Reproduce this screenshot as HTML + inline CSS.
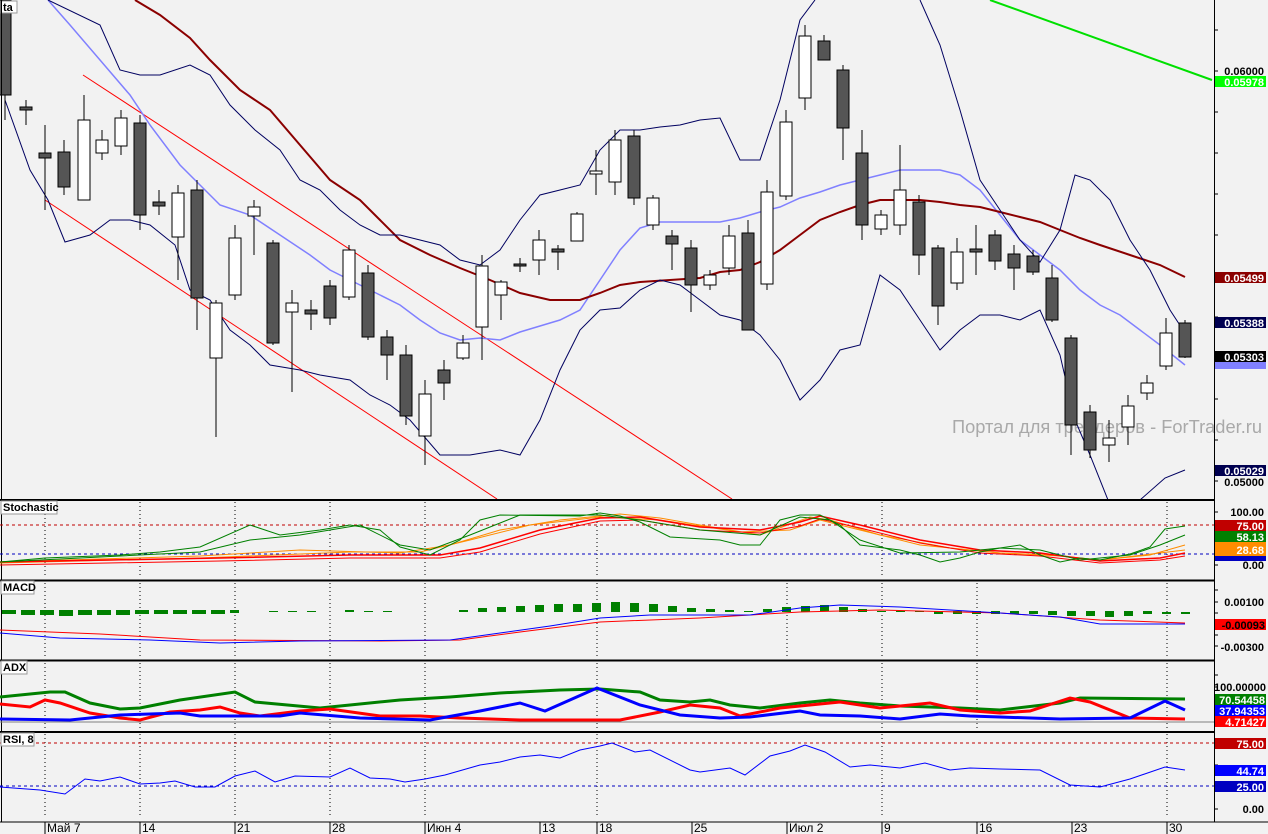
<!DOCTYPE html>
<html><head><meta charset="utf-8"><style>
html,body{margin:0;padding:0;background:#f2f2f2;}
svg{display:block;font-family:"Liberation Sans",sans-serif;}
.t{font-size:11px;font-weight:bold;}
.w{fill:#fff;}
</style></head><body>
<svg width="1268" height="834" viewBox="0 0 1268 834" xmlns="http://www.w3.org/2000/svg">
<rect width="1268" height="834" fill="#f2f2f2"/>
<defs><clipPath id="m"><rect x="0" y="0" width="1214" height="499"/></clipPath></defs>
<text x="952" y="433" font-size="18" fill="#a9a9a9" textLength="310" lengthAdjust="spacingAndGlyphs">Портал для трейдеров - ForTrader.ru</text>
<g clip-path="url(#m)">
<line x1="990" y1="0" x2="1212" y2="80" stroke="#00e000" stroke-width="2"/>
<line x1="83" y1="75" x2="732" y2="499" stroke="#ff0000" stroke-width="1"/>
<line x1="45" y1="200" x2="497" y2="499" stroke="#ff0000" stroke-width="1"/>
<polyline fill="none" stroke="#8080ff" stroke-width="1.5" points="48,0 70,25 100,60 130,95 150,125 180,165 200,185 220,205 250,215 280,235 310,255 330,270 350,280 380,295 400,305 420,320 440,333 460,340 480,338 500,340 520,332 540,326 560,320 580,310 600,280 620,250 640,228 660,222 720,222 740,218 760,212 780,207 800,198 820,192 840,185 860,180 880,175 900,170 940,170 960,175 980,190 1000,215 1020,240 1040,255 1060,270 1080,290 1100,305 1120,315 1140,330 1160,345 1185,365"/>
<polyline fill="none" stroke="#8b0000" stroke-width="2" points="135,0 160,15 190,38 210,60 240,90 270,110 300,145 330,180 360,200 380,220 400,240 430,255 460,268 490,280 520,293 550,300 580,300 600,293 620,285 640,282 670,280 700,278 720,272 740,270 760,262 780,250 800,235 820,220 840,212 860,205 880,200 920,200 940,202 960,205 980,207 1000,212 1020,217 1040,222 1060,230 1080,238 1100,245 1130,255 1160,265 1185,277"/>
<polyline fill="none" stroke="#000060" stroke-width="1" points="48,0 100,25 120,70 140,75 160,75 190,65 210,75 230,105 255,130 280,150 300,180 320,190 340,210 360,225 380,235 400,235 420,240 440,245 460,260 480,265 500,250 520,220 540,195 560,190 580,185 600,150 620,130 640,130 660,127 680,125 700,120 720,118 740,160 760,160 780,100 800,20 815,0"/>
<polyline fill="none" stroke="#000060" stroke-width="1" points="920,0 940,45 960,110 980,180 1000,210 1020,240 1040,262 1060,230 1075,175 1090,180 1110,200 1130,240 1150,270 1170,310 1185,333"/>
<polyline fill="none" stroke="#000060" stroke-width="1" points="5,100 30,170 48,200 65,242 90,235 110,220 130,220 150,225 175,245 190,290 210,300 230,330 250,345 270,365 300,370 320,375 350,380 370,395 390,405 410,420 440,455 470,455 500,450 520,455 540,420 560,370 580,330 600,310 620,308 640,290 660,280 680,285 700,300 720,315 740,320 760,335 780,360 800,400 820,380 840,350 860,345 880,275 900,290 920,320 940,350 960,330 980,315 1000,315 1020,320 1040,310 1060,355 1075,420 1090,455 1108,500"/>
<polyline fill="none" stroke="#000060" stroke-width="1" points="1140,500 1165,478 1185,470"/>
<path stroke="#000" stroke-width="1" fill="none" d="M5 0V120M26 100V125M45 125V210M64 140V195M84 95V200M102 130V160M121 110V155M140 115V230M159 190V215M178 185V280M197 180V330M216 300V437M235 225V300M254 200V255M273 240V345M292 290V392M311 300V330M330 280V325M349 245V300M368 265V340M387 330V380M406 345V425M425 380V465M444 360V400M463 335V360M482 255V360M501 280V320M520 258V272M539 230V275M558 245V270M577 212V241M596 150V195M615 130V195M634 130V205M653 195V230M672 230V270M691 240V312M710 270V290M729 225V275M748 220V330M767 180V290M786 110V200M805 25V110M824 35V60M843 65V160M862 130V240M881 210V235M900 145V235M919 195V275M938 245V325M957 238V290M976 225V275M995 230V270M1014 245V290M1033 250V275M1052 265V322M1071 335V455M1090 405V458M1109 420V462M1128 395V445M1147 375V400M1166 318V370M1185 320V358"/>
<g stroke="#000" stroke-width="1">
<g fill="#555">
<rect x="-1" y="0" width="12" height="95"/><rect x="20" y="107" width="12" height="3"/><rect x="39" y="153" width="12" height="5"/><rect x="58" y="152" width="12" height="35"/><rect x="134" y="123" width="12" height="92"/><rect x="153" y="202" width="12" height="4"/><rect x="191" y="190" width="12" height="108"/><rect x="267" y="243" width="12" height="100"/><rect x="305" y="310" width="12" height="4"/><rect x="324" y="286" width="12" height="32"/><rect x="362" y="273" width="12" height="64"/><rect x="381" y="337" width="12" height="18"/><rect x="400" y="355" width="12" height="61"/><rect x="438" y="370" width="12" height="13"/><rect x="514" y="264" width="12" height="2"/><rect x="552" y="249" width="12" height="3"/><rect x="628" y="136" width="12" height="62"/><rect x="666" y="236" width="12" height="8"/><rect x="685" y="248" width="12" height="37"/><rect x="742" y="233" width="12" height="97"/><rect x="818" y="41" width="12" height="19"/><rect x="837" y="70" width="12" height="58"/><rect x="856" y="153" width="12" height="72"/><rect x="913" y="202" width="12" height="53"/><rect x="932" y="248" width="12" height="58"/><rect x="970" y="249" width="12" height="3"/><rect x="989" y="235" width="12" height="26"/><rect x="1008" y="254" width="12" height="14"/><rect x="1027" y="256" width="12" height="16"/><rect x="1046" y="278" width="12" height="42"/><rect x="1065" y="338" width="12" height="87"/><rect x="1084" y="412" width="12" height="38"/><rect x="1179" y="323" width="12" height="34"/>
</g>
<g fill="#fff">
<rect x="78" y="120" width="12" height="80"/><rect x="96" y="140" width="12" height="13"/><rect x="115" y="118" width="12" height="28"/><rect x="172" y="193" width="12" height="44"/><rect x="210" y="303" width="12" height="55"/><rect x="229" y="238" width="12" height="57"/><rect x="248" y="207" width="12" height="9"/><rect x="286" y="303" width="12" height="9"/><rect x="343" y="250" width="12" height="47"/><rect x="419" y="394" width="12" height="42"/><rect x="457" y="343" width="12" height="15"/><rect x="476" y="266" width="12" height="61"/><rect x="495" y="282" width="12" height="13"/><rect x="533" y="240" width="12" height="20"/><rect x="571" y="214" width="12" height="27"/><rect x="590" y="171" width="12" height="3"/><rect x="609" y="140" width="12" height="42"/><rect x="647" y="198" width="12" height="27"/><rect x="704" y="275" width="12" height="10"/><rect x="723" y="236" width="12" height="32"/><rect x="761" y="192" width="12" height="92"/><rect x="780" y="122" width="12" height="74"/><rect x="799" y="36" width="12" height="62"/><rect x="875" y="215" width="12" height="14"/><rect x="894" y="190" width="12" height="35"/><rect x="951" y="252" width="12" height="31"/><rect x="1103" y="438" width="12" height="7"/><rect x="1122" y="406" width="12" height="21"/><rect x="1141" y="383" width="12" height="10"/><rect x="1160" y="333" width="12" height="33"/>
</g></g>
</g>
<rect x="1" y="1" width="16" height="12" fill="#fff" stroke="#999"/>
<text x="3" y="11" class="t">ta</text>
<g stroke="#000">
<line x1="1214.5" y1="0" x2="1214.5" y2="822" stroke-width="1"/>
<line x1="0" y1="500" x2="1215" y2="500" stroke-width="2"/>
<line x1="0" y1="580.5" x2="1215" y2="580.5" stroke-width="2"/>
<line x1="0" y1="660.5" x2="1215" y2="660.5" stroke-width="2"/>
<line x1="0" y1="732" x2="1215" y2="732" stroke-width="2"/>
<line x1="0" y1="822" x2="1268" y2="822" stroke-width="1"/>
<line x1="1.5" y1="0" x2="1.5" y2="822" stroke-width="1"/>
</g>
<path stroke="#000" d="M1214 30H1218M1214 71H1218M1214 112H1218M1214 153H1218M1214 194H1218M1214 235H1218M1214 276H1218M1214 317H1218M1214 358H1218M1214 399H1218M1214 440H1218M1214 481H1218"/>
<g stroke="#000" stroke-dasharray="1,3">
<path d="M45 502V578M140 502V578M235 502V578M330 502V578M425 502V578M597 502V578M882 502V578M1167 502V578M45 583V658M140 583V658M235 583V658M330 583V658M425 583V658M597 583V658M787 583V658M882 583V658M977 583V658M1167 583V658M45 663V730M140 663V730M235 663V730M330 663V730M425 663V730M597 663V730M882 663V730M977 663V730M1167 663V730M45 734V818M140 734V818M235 734V818M330 734V818M425 734V818M597 734V818M882 734V818M1167 734V818"/>
</g>
<line x1="0" y1="525" x2="1214" y2="525" stroke="#c00000" stroke-dasharray="3,3"/>
<line x1="0" y1="554" x2="1214" y2="554" stroke="#0000c0" stroke-dasharray="3,3"/>
<polyline fill="none" stroke="#ff8c00" points="0,562 200,556 300,550 400,553 450,545 500,530 560,520 620,514 660,518 700,525 760,535 810,517 830,520 880,535 950,548 1000,553 1050,555 1100,560 1150,555 1185,545"/>
<polyline fill="none" stroke="#ff8c00" points="0,563 200,558 350,552 420,552 470,540 530,525 600,517 660,520 740,532 790,530 820,520 860,530 920,545 1000,553 1060,556 1100,560 1160,553 1185,550"/>
<polyline fill="none" stroke="#ff0000" stroke-width="1.5" points="0,562 220,558 350,555 440,555 480,548 540,530 600,518 640,517 700,527 760,530 800,522 820,516 860,525 920,540 980,550 1040,553 1100,561 1160,558 1185,553"/>
<polyline fill="none" stroke="#ff0000" points="0,565 220,561 350,558 440,558 480,552 540,534 600,521 640,520 700,530 760,533 800,526 820,519 860,528 920,543 980,553 1040,556 1100,563 1160,560 1185,556"/>
<polyline fill="none" stroke="#008000" points="0,562 45,558 120,555 160,552 200,547 250,525 280,535 320,530 350,525 380,530 400,547 430,555 460,540 480,520 500,515 580,516 600,513 620,516 640,522 670,537 720,540 740,545 760,545 780,520 800,515 820,515 840,525 860,545 900,550 920,555 940,562 960,558 980,552 1000,548 1020,545 1040,555 1060,562 1080,558 1100,560 1130,554 1150,547 1165,529 1185,526"/>
<polyline fill="none" stroke="#008000" points="0,562 200,552 250,540 300,535 360,525 400,545 430,550 470,535 520,515 600,515 640,520 700,530 760,535 800,517 830,520 860,540 900,553 960,552 1000,548 1040,550 1080,560 1130,555 1160,545 1185,535"/>
<rect x="1" y="501" width="56" height="13" fill="#fff" stroke="#999"/>
<text x="3" y="511" class="t">Stochastic</text>
<g fill="#008000">
<rect x="2" y="610" width="14" height="4"/><rect x="21" y="610" width="14" height="5"/><rect x="40" y="610" width="14" height="5"/><rect x="59" y="610" width="14" height="6"/><rect x="78" y="610" width="14" height="5"/><rect x="97" y="610" width="14" height="5"/><rect x="116" y="610" width="14" height="5"/><rect x="135" y="610" width="14" height="4"/><rect x="154" y="610" width="14" height="4"/><rect x="173" y="610" width="14" height="4"/><rect x="192" y="610" width="14" height="4"/><rect x="211" y="610" width="14" height="4"/><rect x="230" y="610" width="9" height="3"/>
<rect x="269" y="611" width="9" height="1"/><rect x="288" y="611" width="9" height="1"/><rect x="307" y="611" width="9" height="1"/><rect x="345" y="610" width="9" height="2"/><rect x="364" y="611" width="9" height="1"/><rect x="383" y="611" width="9" height="1"/>
<rect x="459" y="610" width="9" height="2"/><rect x="478" y="608" width="9" height="4"/><rect x="497" y="607" width="9" height="5"/><rect x="516" y="606" width="9" height="6"/><rect x="535" y="605" width="9" height="7"/><rect x="554" y="604" width="9" height="8"/><rect x="573" y="604" width="9" height="8"/><rect x="592" y="603" width="9" height="9"/><rect x="611" y="602" width="9" height="10"/><rect x="630" y="603" width="9" height="9"/><rect x="649" y="604" width="9" height="8"/><rect x="668" y="606" width="9" height="6"/><rect x="687" y="608" width="9" height="4"/><rect x="706" y="609" width="9" height="3"/><rect x="725" y="610" width="9" height="2"/><rect x="744" y="611" width="9" height="1"/><rect x="763" y="609" width="9" height="3"/><rect x="782" y="607" width="9" height="5"/><rect x="801" y="606" width="9" height="6"/><rect x="820" y="605" width="9" height="6"/><rect x="839" y="607" width="9" height="5"/><rect x="858" y="609" width="9" height="3"/><rect x="877" y="611" width="9" height="1"/><rect x="896" y="611" width="9" height="1"/><rect x="915" y="611" width="9" height="1"/><rect x="934" y="611" width="9" height="3"/><rect x="953" y="611" width="9" height="3"/><rect x="972" y="611" width="9" height="3"/><rect x="991" y="611" width="9" height="3"/><rect x="1010" y="611" width="9" height="3"/><rect x="1029" y="611" width="9" height="3"/><rect x="1048" y="611" width="9" height="4"/><rect x="1067" y="611" width="9" height="5"/><rect x="1086" y="611" width="9" height="5"/><rect x="1105" y="611" width="9" height="6"/><rect x="1124" y="611" width="9" height="5"/><rect x="1143" y="611" width="9" height="3"/><rect x="1162" y="612" width="9" height="2"/><rect x="1181" y="612" width="9" height="2"/>
</g>
<polyline fill="none" stroke="#ff0000" points="0,630 100,634 200,640 380,641 460,640 520,632 600,622 700,618 800,612 880,610 1000,613 1100,620 1185,623"/>
<polyline fill="none" stroke="#0000ff" points="0,633 60,638 150,640 220,643 300,641 450,640 500,633 550,626 600,618 650,615 750,615 800,608 840,605 900,607 1000,613 1060,617 1100,624 1185,624"/>
<rect x="1" y="581" width="33" height="13" fill="#fff" stroke="#999"/>
<text x="3" y="591" class="t">MACD</text>
<line x1="0" y1="722" x2="1214" y2="722" stroke="#808080"/>
<polyline fill="none" stroke="#008000" stroke-width="3" points="0,697 50,692 65,692 90,703 120,709 140,708 180,700 235,692 255,702 320,708 350,705 400,700 450,697 500,693 560,690 600,689 640,692 660,700 690,702 710,700 730,705 760,708 800,703 830,700 860,703 900,706 960,708 1000,710 1060,703 1080,698 1185,699"/>
<polyline fill="none" stroke="#ff0000" stroke-width="3" points="0,704 30,707 45,700 60,703 90,713 120,718 140,720 170,712 200,710 220,707 240,713 260,716 300,711 330,709 380,716 420,716 460,718 520,720 620,720 660,712 690,705 720,708 740,716 780,708 820,704 840,702 880,708 930,703 960,710 1000,713 1030,711 1070,698 1090,702 1130,718 1185,719"/>
<polyline fill="none" stroke="#0000ff" stroke-width="3" points="0,719 70,720 120,715 180,713 200,716 280,716 300,713 360,718 430,720 480,711 520,703 545,711 597,688 640,705 680,715 720,718 750,717 800,711 820,715 860,716 900,719 940,714 970,716 1000,717 1060,719 1130,718 1165,701 1185,710"/>
<rect x="1" y="661" width="26" height="13" fill="#fff" stroke="#999"/>
<text x="3" y="671" class="t">ADX</text>
<line x1="0" y1="743" x2="1214" y2="743" stroke="#c00000" stroke-dasharray="3,3"/>
<line x1="0" y1="786" x2="1214" y2="786" stroke="#0000c0" stroke-dasharray="3,3"/>
<polyline fill="none" stroke="#0000ff" points="0,787 40,790 65,794 85,779 100,781 120,777 140,784 160,783 175,781 195,787 215,787 235,776 255,771 275,782 295,776 330,777 350,768 370,778 390,779 405,782 425,779 445,775 480,765 500,762 520,757 540,755 560,758 580,750 600,746 612,743 635,752 650,750 690,770 700,772 730,768 745,775 770,756 790,751 805,745 825,752 850,767 870,765 900,768 925,763 950,770 970,768 1000,769 1040,770 1070,785 1100,787 1130,779 1165,767 1185,770"/>
<rect x="1" y="733" width="33" height="13" fill="#fff" stroke="#999"/>
<text x="3" y="743" class="t">RSI, 8</text>
<path stroke="#000" d="M1214 512H1218M1214 525H1218M1214 538H1218M1214 551H1218M1214 565H1218M1214 590H1218M1214 602H1218M1214 613H1218M1214 624H1218M1214 635H1218M1214 646H1218M1214 675H1218M1214 687H1218M1214 699H1218M1214 711H1218M1214 744H1218M1214 765H1218M1214 787H1218M1214 809H1218"/>
<g class="t" text-anchor="end">
<text x="1264" y="75">0.06000</text>
<rect x="1215" y="76" width="51" height="11" fill="#00ff00"/><text x="1264" y="86" class="w">0.05978</text>
<rect x="1215" y="272" width="51" height="11" fill="#8b0000"/><text x="1264" y="282" class="w">0.05499</text>
<rect x="1215" y="317" width="51" height="11" fill="#000050"/><text x="1264" y="327" class="w">0.05388</text>
<rect x="1215" y="362" width="51" height="7" fill="#8080ff"/>
<rect x="1215" y="351" width="51" height="11" fill="#000"/><text x="1264" y="361" class="w">0.05303</text>
<rect x="1215" y="465" width="51" height="11" fill="#000050"/><text x="1264" y="475" class="w">0.05029</text>
<text x="1264" y="486">0.05000</text>
<text x="1264" y="516">100.00</text>
<rect x="1215" y="520" width="51" height="11" fill="#c00000"/><text x="1264" y="530" class="w">75.00</text>
<rect x="1215" y="531" width="51" height="11" fill="#008000"/><text x="1264" y="541" class="w">58.13</text>
<rect x="1215" y="556" width="51" height="5" fill="#0000c0"/>
<rect x="1215" y="542" width="51" height="14" fill="#ff8c00"/><text x="1264" y="554" class="w">28.68</text>
<text x="1264" y="569">0.00</text>
<text x="1264" y="606">0.00100</text>
<rect x="1215" y="619" width="51" height="11" fill="#ff0000"/><text x="1265" y="629" fill="#000">-0.00093</text>
<text x="1264" y="651">-0.00300</text>
<text x="1266" y="691">100.00000</text>
<rect x="1215" y="694" width="51" height="11" fill="#008000"/><text x="1265" y="704" class="w">70.54458</text>
<rect x="1215" y="705" width="51" height="11" fill="#0000ff"/><text x="1265" y="715" class="w">37.94353</text>
<rect x="1215" y="716" width="51" height="11" fill="#ff0000"/><text x="1265" y="726" class="w">4.71427</text>
<rect x="1215" y="738" width="51" height="11" fill="#c00000"/><text x="1264" y="748" class="w">75.00</text>
<rect x="1215" y="765" width="51" height="11" fill="#0000ff"/><text x="1264" y="775" class="w">44.74</text>
<rect x="1215" y="781" width="51" height="11" fill="#0000c0"/><text x="1264" y="791" class="w">25.00</text>
<text x="1264" y="813">0.00</text>
</g>
<path stroke="#000" d="M45 822V834M140 822V834M235 822V834M330 822V834M425 822V834M540 822V834M597 822V834M692 822V834M787 822V834M882 822V834M977 822V834M1072 822V834M1167 822V834"/>
<g font-size="12">
<text x="47" y="832">Май 7</text><text x="142" y="832">14</text><text x="237" y="832">21</text><text x="332" y="832">28</text><text x="427" y="832">Июн 4</text><text x="542" y="832">13</text><text x="599" y="832">18</text><text x="694" y="832">25</text><text x="789" y="832">Июл 2</text><text x="884" y="832">9</text><text x="979" y="832">16</text><text x="1074" y="832">23</text><text x="1169" y="832">30</text>
</g>
</svg>
</body></html>
